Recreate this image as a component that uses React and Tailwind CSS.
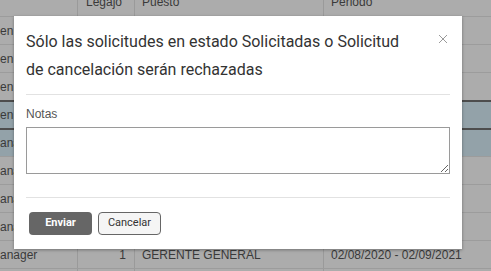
import React from "react";

const rows = [
  { a: "en E", sel: false },
  { a: "en E", sel: false },
  { a: "en E", sel: false },
  { a: "en E", sel: true },
  { a: "ana", sel: true },
  { a: "ana", sel: false },
  { a: "ana", sel: false },
  { a: "ana", sel: false },
  { a: "anager", b: "1", c: "GERENTE GENERAL", d: "02/08/2020 - 02/09/2021", sel: false },
  { a: "", sel: false },
];

function Row({ r }) {
  const bg = r.sel ? "bg-[#93a2a9]" : "bg-[#acacac]";
  const border = r.sel ? "border-t-2 border-t-[#4d4d4d]" : "border-t border-t-[#9c9c9c]";
  return (
    <div className={`flex h-[28px] ${bg} ${border} text-[12px] text-[#3a3a3a]`}>
      <div className="w-[78px] shrink-0 border-r border-[#9a9a9a] flex items-center overflow-hidden whitespace-nowrap">{r.a}</div>
      <div className="w-[57px] shrink-0 border-r border-[#9a9a9a] flex items-center justify-end pr-[8px]">{r.b}</div>
      <div className="w-[189px] shrink-0 border-r border-[#9a9a9a] flex items-center pl-[7px]">{r.c}</div>
      <div className="flex-1 flex items-center pl-[7px]">{r.d}</div>
    </div>
  );
}

export default function App() {
  return (
    <div
      className="relative w-[491px] h-[271px] overflow-hidden bg-[#acacac]"
      style={{ fontFamily: '"Liberation Sans", Arial, sans-serif' }}
    >
      <div className="mt-[-12px]">
        <div className="flex h-[28px] bg-[#acacac] text-[12px] text-[#3a3a3a]">
          <div className="w-[78px] shrink-0 border-r border-[#9a9a9a]"></div>
          <div className="w-[57px] shrink-0 border-r border-[#9a9a9a] flex items-center pl-[8px]">Legajo</div>
          <div className="w-[189px] shrink-0 border-r border-[#9a9a9a] flex items-center pl-[7px]">Puesto</div>
          <div className="flex-1 flex items-center pl-[7px]">Periodo</div>
        </div>
        {rows.map((r, i) => (
          <Row key={i} r={r} />
        ))}
      </div>

      <div className="absolute left-[14px] top-[16px] w-[448px] h-[233px] bg-white shadow-[0_1px_3px_rgba(0,0,0,0.35)] flex flex-col">
        <div className="mx-[12px] pt-[12px] pb-[10px] border-b border-[#e2e2e2] relative">
          <div
            className="text-[16px] leading-[28px] text-[#333] pr-[30px]"
            style={{ fontFamily: 'Roboto, "Noto Sans", sans-serif' }}
          >
            Sólo las solicitudes en estado Solicitadas o Solicitud de cancelación serán rechazadas
          </div>
          <button className="absolute right-[1px] top-[17px] w-[12px] h-[12px] flex items-center justify-center">
            <svg width="10" height="10" viewBox="0 0 10 10">
              <path d="M1 1 L9 9 M9 1 L1 9" stroke="#9a9a9a" strokeWidth="1" />
            </svg>
          </button>
        </div>
        <div className="mx-[12px] pt-[11px] pb-[23px] border-b border-[#e2e2e2] flex flex-col">
          <div className="text-[12px] leading-[16px] text-[#555]">Notas</div>
          <textarea className="mt-[5px] h-[47px] border border-[#9a9a9a] bg-white resize-y"></textarea>
        </div>
        <div className="px-[15px] pt-[14px] flex gap-[6px]" style={{ fontFamily: 'Roboto, "Noto Sans", sans-serif' }}>
          <button className="w-[63px] h-[23px] rounded-[4px] bg-[#666666] text-white text-[11px] font-bold">Enviar</button>
          <button className="w-[63px] h-[23px] rounded-[4px] bg-[#f5f5f5] border border-[#666] text-[#333] text-[11px]">Cancelar</button>
        </div>
      </div>
    </div>
  );
}
